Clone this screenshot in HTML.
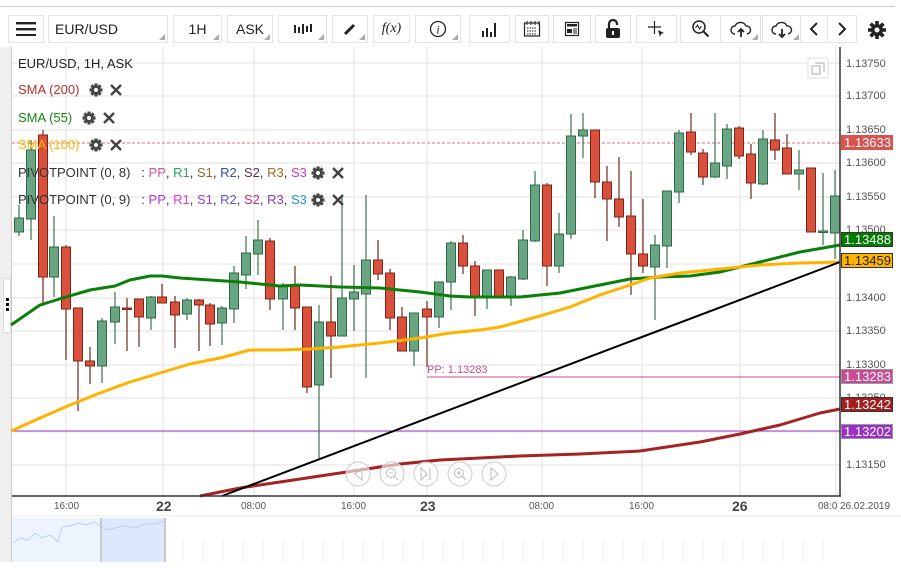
<!DOCTYPE html>
<html><head><meta charset="utf-8"><style>
body{margin:0;width:901px;height:568px;background:#fff;overflow:hidden;font-family:"Liberation Sans",sans-serif;position:relative}
.b{position:absolute;top:15px;height:28px;border:1px solid #e3e3e3;box-sizing:border-box;background:#fff;font-size:14px;color:#222;display:flex;align-items:center;justify-content:center}
.b .tri{position:absolute;right:2px;bottom:2px;width:0;height:0;border-left:6px solid transparent;border-bottom:6px solid #aaa}
.lg{position:absolute;font-size:13px;white-space:nowrap;display:flex;align-items:center}
.ic{display:inline-flex;gap:6px;margin-left:10px}
.pl{position:absolute;left:841px;width:52px;height:15px;font-size:13px;color:#fff;box-sizing:border-box;border:1px solid #333;padding-left:2px;line-height:13px}
.ax{position:absolute;left:846px;font-size:11px;color:#555}
.tl{position:absolute;top:501px;font-size:10px;color:#555}
.td{position:absolute;top:498px;font-size:14px;color:#444;font-weight:bold}
</style></head><body>
<svg width="0" height="0" style="position:absolute"><defs>
<g id="gr"><g stroke="#444" stroke-width="3.2"><path d="M7 0.5v13M0.5 7h13M2.4 2.4l9.2 9.2M11.6 2.4L2.4 11.6"/></g><circle cx="7" cy="7" r="4.6" fill="#444"/><circle cx="7" cy="7" r="2" fill="#fff"/></g>
<g id="xx"><path d="M2 2l10 10M12 2L2 12" stroke="#444" stroke-width="2.4"/></g>
</defs></svg>
<div style="position:absolute;left:0;top:6px;width:895px;height:1px;background:#ccc"></div>
<div class="b" style="left:8px;width:36px"><svg width="20" height="14"><rect y="0" width="20" height="2.4" fill="#222"/><rect y="6" width="20" height="2.4" fill="#222"/><rect y="12" width="20" height="2.4" fill="#222"/></svg></div>
<div class="b" style="left:48px;width:120px;justify-content:flex-start;padding-left:6px">EUR/USD<span class="tri"></span></div>
<div class="b" style="left:173px;width:49px">1H<span class="tri"></span></div>
<div class="b" style="left:227px;width:46px">ASK<span class="tri"></span></div>
<div class="b" style="left:278px;width:49px"><svg width="20" height="14"><path d="M2 3v8M6 5v6M10 2v10M14 4v6M18 2v8" stroke="#222" stroke-width="2"/></svg><span class="tri"></span></div>
<div class="b" style="left:332px;width:36px"><svg width="14" height="14"><path d="M2 12L11 3" stroke="#222" stroke-width="3"/></svg><span class="tri"></span></div>
<div class="b" style="left:373px;width:37px;font-family:'Liberation Serif',serif;font-style:italic;font-size:14px">f(x)</div>
<div class="b" style="left:415px;width:46px"><svg width="18" height="18"><circle cx="9" cy="9" r="7.5" fill="none" stroke="#222" stroke-width="1.3"/><text x="9" y="13.5" font-size="12" font-style="italic" font-family="Liberation Serif" text-anchor="middle" fill="#222">i</text></svg><span class="tri"></span></div>
<div class="b" style="left:469px;width:41px"><svg width="18" height="16"><path d="M2 16v-6M6 16v-9M10 16v-5M14 16v-14" stroke="#222" stroke-width="2"/></svg></div>
<div class="b" style="left:515px;width:34px"><svg width="18" height="18"><rect x="1.5" y="3" width="15" height="13" fill="none" stroke="#222" stroke-width="1.2"/><path d="M4 1v4M8 1v4M12 1v4M16 1v4" stroke="#222"/><path d="M4 8h10M4 11h10M4 14h10" stroke="#222" stroke-dasharray="1.5 1"/></svg></div>
<div class="b" style="left:553px;width:38px"><svg width="16" height="16"><rect x="1.5" y="1.5" width="13" height="13" fill="none" stroke="#222" stroke-width="1.2"/><rect x="3" y="3" width="10" height="2.5" fill="#222"/><rect x="3" y="8" width="5" height="4" fill="#222"/><path d="M9 8h4M9 10h4M9 12h4" stroke="#222"/></svg></div>
<div class="b" style="left:595px;width:36px"><svg width="16" height="20"><path d="M4 9V5a4 4 0 0 1 8 0v1" fill="none" stroke="#222" stroke-width="2.2"/><rect x="1" y="9" width="14" height="10" rx="2" fill="#222"/><rect x="7" y="12" width="2" height="4" fill="#fff"/></svg></div>
<div class="b" style="left:636px;width:41px"><svg width="20" height="18"><path d="M1 7h13M7.5 1v13" stroke="#222" stroke-width="1.2"/><path d="M11 10l6 3-3 1-1 3z" fill="#222"/></svg></div>
<div class="b" style="left:680px;width:41px"><svg width="20" height="20"><circle cx="8" cy="8" r="6" fill="none" stroke="#222" stroke-width="1.5"/><path d="M12.5 12.5l5 5" stroke="#222" stroke-width="2"/><path d="M4.5 9l2-3 2 4 2-3" fill="none" stroke="#222"/></svg></div>
<div class="b" style="left:720px;width:41px"><svg width="22" height="18"><path d="M5 14a4 4 0 0 1 0-8a6 6 0 0 1 11 0a4 4 0 0 1 1 8" fill="none" stroke="#222" stroke-width="1.4"/><path d="M11 17v-8M8 12l3-3 3 3" fill="none" stroke="#222" stroke-width="1.8"/></svg><span class="tri"></span></div>
<div class="b" style="left:762px;width:40px"><svg width="22" height="18"><path d="M5 14a4 4 0 0 1 0-8a6 6 0 0 1 11 0a4 4 0 0 1 1 8" fill="none" stroke="#222" stroke-width="1.4"/><path d="M11 9v8M8 14l3 3 3-3" fill="none" stroke="#222" stroke-width="1.8"/></svg><span class="tri"></span></div>
<div class="b" style="left:800px;width:28px"><svg width="12" height="16"><path d="M9 2L3 8l6 6" fill="none" stroke="#222" stroke-width="2"/></svg></div>
<div class="b" style="left:827px;width:30px"><svg width="12" height="16"><path d="M3 2l6 6-6 6" fill="none" stroke="#222" stroke-width="2"/></svg></div>
<div style="position:absolute;left:867px;top:20px"><svg width="20" height="20" viewBox="0 0 20 20"><g fill="#222"><circle cx="10" cy="10" r="6"/><g stroke="#222" stroke-width="3.6"><path d="M10 1v18M1 10h18M3.6 3.6l12.8 12.8M16.4 3.6L3.6 16.4"/></g></g><circle cx="10" cy="10" r="2.5" fill="#fff"/></svg></div>
<div style="position:absolute;left:0;top:47px;width:11px;height:515px;background:#efefef;border-right:1px solid #ccc"></div>
<div style="position:absolute;left:3px;top:278px;width:8px;height:55px;background:#fff;border:1px solid #ddd;box-sizing:border-box"></div>
<div style="position:absolute;left:6px;top:298px;width:3px;height:3px;background:#000;box-shadow:0 5px 0 #000,0 10px 0 #000"></div>
<svg id="ch" style="position:absolute;left:0;top:0" width="901" height="568"></svg>
<div class="lg" style="left:18px;top:56px;color:#222">EUR/USD, 1H, ASK</div>
<div class="lg" style="left:18px;top:82px;color:#b22f2f">SMA (200)<span class="ic"><svg width="14" height="14"><use href="#gr"/></svg><svg width="14" height="14"><use href="#xx"/></svg></span></div>
<div class="lg" style="left:18px;top:110px;color:#118811">SMA (55)<span class="ic"><svg width="14" height="14"><use href="#gr"/></svg><svg width="14" height="14"><use href="#xx"/></svg></span></div>
<div class="lg" style="left:18px;top:137px;color:#ffb300">SMA (100)<span class="ic"><svg width="14" height="14"><use href="#gr"/></svg><svg width="14" height="14"><use href="#xx"/></svg></span></div>
<div class="lg" style="left:18px;top:165px;color:#333">PIVOTPOINT (0, 8) &nbsp;&nbsp;: <span style="color:#d94f9f">&nbsp;PP</span>, <span style="color:#2ba35a">&nbsp;R1</span>, <span style="color:#8a6a2a">&nbsp;S1</span>, <span style="color:#2d4fb0">&nbsp;R2</span>, <span style="color:#553355">&nbsp;S2</span>, <span style="color:#a06a20">&nbsp;R3</span>, <span style="color:#c53ac5">&nbsp;S3</span><span class="ic" style="margin-left:4px"><svg width="14" height="14"><use href="#gr"/></svg><svg width="14" height="14"><use href="#xx"/></svg></span></div>
<div class="lg" style="left:18px;top:192px;color:#333">PIVOTPOINT (0, 9) &nbsp;&nbsp;: <span style="color:#b03ad0">&nbsp;PP</span>, <span style="color:#e040c0">&nbsp;R1</span>, <span style="color:#a040d0">&nbsp;S1</span>, <span style="color:#7050d0">&nbsp;R2</span>, <span style="color:#c03070">&nbsp;S2</span>, <span style="color:#9040b0">&nbsp;R3</span>, <span style="color:#3090c0">&nbsp;S3</span><span class="ic" style="margin-left:4px"><svg width="14" height="14"><use href="#gr"/></svg><svg width="14" height="14"><use href="#xx"/></svg></span></div>
<div class="lg" style="left:427px;top:364px;font-size:11px;color:#c0508f">PP: 1.13283</div>
<div class="ax" style="top:58px">1.13750</div><div class="ax" style="top:90px">1.13700</div><div class="ax" style="top:124px">1.13650</div><div class="ax" style="top:157px">1.13600</div><div class="ax" style="top:191px">1.13550</div><div class="ax" style="top:224px">1.13500</div><div class="ax" style="top:258px">1.13450</div><div class="ax" style="top:292px">1.13400</div><div class="ax" style="top:325px">1.13350</div><div class="ax" style="top:359px">1.13300</div><div class="ax" style="top:392px">1.13250</div><div class="ax" style="top:459px">1.13150</div>
<div class="pl" style="top:135px;background:#d9534f;border-color:#d9534f">1.13633</div>
<div class="pl" style="top:232px;background:#007c00">1.13488</div>
<div class="pl" style="top:253px;background:#ffb400;color:#222">1.13459</div>
<div class="pl" style="top:369px;background:#c84b95;border-color:#999">1.13283</div>
<div class="pl" style="top:397px;background:#a31f1f">1.13242</div>
<div class="pl" style="top:424px;background:#9b30c8;border-color:#999">1.13202</div>
<div class="tl" style="left:54px">16:00</div><div class="td" style="left:156px">22</div><div class="tl" style="left:241px">08:00</div><div class="tl" style="left:341px">16:00</div><div class="td" style="left:420px">23</div><div class="tl" style="left:529px">08:00</div><div class="tl" style="left:629px">16:00</div><div class="td" style="left:732px">26</div><div class="tl" style="left:818px">08:0</div><div class="tl" style="left:840px">26.02.2019</div>
<script>
var s=document.getElementById('ch'),h='';
function L(x1,y1,x2,y2,c,w,d){h+='<line x1="'+x1+'" y1="'+y1+'" x2="'+x2+'" y2="'+y2+'" stroke="'+c+'" stroke-width="'+(w||1)+'"'+(d?' stroke-dasharray="'+d+'"':'')+'/>';}
[63,96,130,163,197,230,264,298,331,365,398,432,465].forEach(function(y){L(12,y,840,y,'#ebebeb',1.5)});
[66,163,254,354,427,542,642,740,836].forEach(function(x){L(x,47,x,496,'#ebebeb',1.5)});
L(12,143,840,143,'#e07070',1,'3 2');
L(12,431,840,431,'#9b30c8',1);
L(427,377,840,377,'#c84b95',1);
var c=[[19,232,218,205,236],[31,219,150,140,240],[43,135,277,130,306],[54,277,247,216,297],[66,247,309,245,360],[78,308,361,308,411],[90,361,366,347,384],[102,366,321,318,383],[115,322,307,292,344],[127,308,309,298,351],[139,299,317,299,347],[151,318,297,296,330],[162,297,303,284,303],[175,302,315,296,348],[187,314,300,298,320],[199,300,305,299,351],[210,305,324,303,346],[222,323,308,306,345],[234,309,273,266,323],[246,275,253,236,289],[258,254,240,220,275],[270,241,299,238,310],[283,299,285,283,330],[295,286,308,266,330],[307,307,387,307,393],[319,385,322,305,458],[331,322,336,276,378],[342,336,298,195,336],[354,299,292,265,331],[366,294,260,195,378],[378,260,274,240,280],[390,273,318,269,330],[402,317,351,307,351],[414,351,313,313,366],[427,309,317,301,367],[439,317,282,282,328],[451,282,243,241,310],[463,243,266,235,274],[475,266,296,261,316],[487,296,270,270,309],[499,270,296,270,296],[511,296,277,276,306],[523,279,240,230,280],[535,241,185,171,242],[547,185,266,183,286],[559,266,234,213,273],[571,234,136,114,239],[583,136,130,113,158],[595,130,182,130,198],[607,182,199,166,241],[619,199,217,157,227],[631,216,254,171,295],[643,254,266,199,273],[655,267,245,235,320],[667,246,191,191,268],[679,192,133,130,203],[691,132,152,113,155],[703,153,177,149,185],[715,177,163,113,178],[727,166,129,124,179],[739,128,156,126,159],[751,154,183,144,199],[763,184,139,130,185],[775,140,150,113,160],[787,148,174,134,174],[799,174,170,150,190],[811,168,232,168,232],[823,232,231,173,245],[835,233,196,170,259]];
c.forEach(function(k){var up=k[2]<k[1];var f=up?'#6aa583':'#d9503c',st=up?'#2e6a45':'#7a2418';L(k[0],k[3],k[0],k[4],up?'#3c7050':'#6e2a1e',1.2);var t=Math.min(k[1],k[2]),b=Math.max(k[1],k[2]);h+='<rect x="'+(k[0]-4.5)+'" y="'+t+'" width="9" height="'+Math.max(b-t,1.5)+'" fill="'+f+'" stroke="'+st+'" stroke-width="1"/>';});
function P(p,c,w){h+='<polyline points="'+p+'" fill="none" stroke="'+c+'" stroke-width="'+w+'" stroke-linejoin="round"/>';}
P('11,325 40,305 66,297 90,290 115,286 130,280 150,276 162,276 180,278 210,280 240,282 280,286 300,285 340,287 380,288 420,292 450,296 470,297 520,297 560,293 600,285 630,279 660,277 690,276 720,272 760,262 800,252 840,245','#0a7f0a',3);
P('11,431 40,418 70,405 100,393 130,382 160,373 190,364 220,358 250,350 280,350 310,349 340,347 380,343 420,338 450,333 480,330 500,327 540,316 570,307 600,295 630,285 650,278 680,273 710,270 760,265 800,263 840,262','#ffb300',3);
P('200,496 240,488 280,482 320,476 360,470 400,464 440,460 480,458 520,456 580,454 640,451 700,442 740,434 780,425 820,413 840,409','#a52323',3);
L(222,496,840,262,'#000',2);
[358,392,426,460,494].forEach(function(x){h+='<circle cx="'+x+'" cy="474" r="12" fill="rgba(255,255,255,.6)" stroke="#ccc"/>';});
h+='<g fill="none" stroke="#bbb"><path d="M362 468l-7 6 7 6z"/><path d="M491 468l7 6-7 6z"/><circle cx="391" cy="473" r="4.5"/><path d="M394 476l4 4M389 473h4"/><circle cx="459" cy="473" r="4.5"/><path d="M462 476l4 4M457 473h4M459 471v4"/><path d="M421 468l6 6-6 6zM430 468v12"/></g>';
L(12,496,841,496,'#333',1.5);L(840,47,840,496,'#333',1.5);
h+='<rect x="808" y="58" width="20" height="20" fill="#fff" stroke="#ddd"/><path d="M812 66h8v8h-8z M815 63h9v9" fill="none" stroke="#aaa"/>';
L(12,516,901,516,'#eee',1);
h+='<rect x="12" y="518" width="89" height="44" fill="#eef4fd"/><rect x="102" y="518" width="63" height="44" fill="#dce8fb"/>';
P('13,543 20,538 28,540 35,533 42,538 50,535 58,542 62,527 70,526 78,523 86,525 94,522 100,526 106,530 115,528 125,526 135,528 145,524 155,524 164,521','#b8d0f5',1);
L(101,518,101,562,'#bbb',1.5);L(165,518,165,562,'#bbb',1.5);
for(var x=183;x<840;x+=20)L(x,540,x,562,'#eee',1);
s.innerHTML=h;
</script>
</body></html>
